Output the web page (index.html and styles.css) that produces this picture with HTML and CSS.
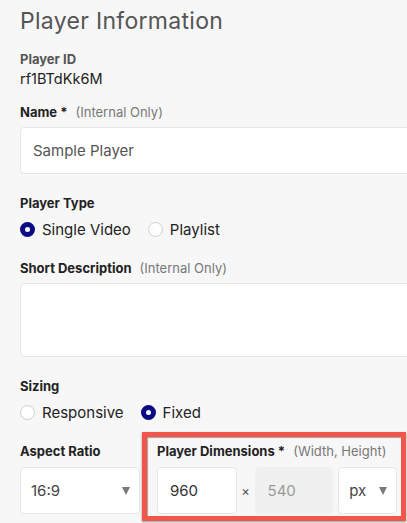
FILE: index.html
```html
<!DOCTYPE html>
<html lang="en">
<head>
<meta charset="utf-8">
<title>Player Information</title>
<link rel="stylesheet" href="styles.css">
</head>
<body>
<main class="form">
  <h1 class="title">Player Information</h1>

  <section class="field field-id">
    <div class="label label-muted">Player ID</div>
    <div class="value">rf1BTdKk6M</div>
  </section>

  <section class="field field-name">
    <div class="label">Name * <span class="hint">(Internal Only)</span></div>
    <div class="input input-wide">Sample Player</div>
  </section>

  <section class="field field-type">
    <div class="label">Player Type</div>
    <div class="radios">
      <span class="radio radio-on"></span><span class="radio-text">Single Video</span>
      <span class="radio"></span><span class="radio-text">Playlist</span>
    </div>
  </section>

  <section class="field field-desc">
    <div class="label">Short Description <span class="hint">(Internal Only)</span></div>
    <div class="input input-wide textarea"></div>
  </section>

  <section class="field field-sizing">
    <div class="label">Sizing</div>
    <div class="radios">
      <span class="radio"></span><span class="radio-text">Responsive</span>
      <span class="radio radio-on"></span><span class="radio-text">Fixed</span>
    </div>
  </section>

  <section class="field row">
    <div class="col col-aspect">
      <div class="label">Aspect Ratio</div>
      <div class="input select select-aspect"><span>16:9</span><span class="caret"></span></div>
    </div>
    <div class="col col-dims">
      <div class="label">Player Dimensions * <span class="hint">(Width, Height)</span></div>
      <div class="dims">
        <div class="input dim">960</div>
        <span class="times">×</span>
        <div class="input dim dim-disabled">540</div>
        <div class="input select select-unit"><span>px</span><span class="caret"></span></div>
      </div>
    </div>
  </section>
</main>
</body>
</html>
```

FILE: styles.css
```css
html {
  overflow: hidden;
  background: #f7f7f7;
}

body {
  margin: 0;
  padding: 0;
  font-family: Inter, "Liberation Sans", sans-serif;
  color: #222;
}

.form {
  width: 460px;
  padding: 0 0 20px 20px;
}

.title {
  margin: 7px 0 0;
  font-size: 23px;
  letter-spacing: 0.3px;
  line-height: 28px;
  font-weight: 400;
  color: #555;
}

.field-id {
  margin-top: 15px;
}

.field-name {
  margin-top: 15px;
}

.field-type {
  margin-top: 20px;
}

.field-desc {
  margin-top: 19px;
}

.field-sizing {
  margin-top: 20px;
}

.label {
  font-size: 13px;
  line-height: 18px;
  font-weight: 700;
  color: #222;
}

.label-muted {
  color: #555;
}

.hint {
  margin-left: 5px;
  font-weight: 400;
  color: #777;
}

.value {
  margin-top: 2px;
  font-size: 14.5px;
  line-height: 18px;
  color: #222;
}

.input {
  box-sizing: border-box;
  height: 47px;
  margin-top: 6px;
  background: #fff;
  border: 1px solid #e6e6e6;
  border-radius: 4px;
  font-size: 15px;
  color: #555;
  display: flex;
  align-items: center;
  padding: 0 12px;
}

.input-wide {
  width: 440px;
}

.textarea {
  height: 74px;
}

.radios {
  margin-top: 6px;
  display: flex;
  align-items: center;
  height: 22px;
  font-size: 15px;
  color: #222;
}

.radio {
  box-sizing: border-box;
  width: 15px;
  height: 15px;
  border-radius: 50%;
  border: 1px solid #cfcfcf;
  background: #fff;
  margin-right: 7px;
}

.radio-on {
  border: 5px solid #0b0b86;
  background: #fff;
}

.radio-text {
  margin-right: 17px;
}

.row {
  margin-top: 19px;
  display: flex;
  gap: 17px;
}

.row .input {
  margin-top: 7px;
}

.col-aspect {
  width: 120px;
}

.col-dims {
  position: relative;
  width: 240px;
}

.col-dims::before {
  content: "";
  position: absolute;
  left: -15px;
  top: -10px;
  right: -9px;
  bottom: -7px;
  border: 5px solid #f2554a;
  box-shadow: inset 1px 1px 1px rgba(0, 0, 0, 0.35), 0 1px 2px rgba(0, 0, 0, 0.4);
  pointer-events: none;
}

.select {
  justify-content: space-between;
  color: #444;
  padding: 0 9px 0 10px;
}

.caret {
  width: 0;
  height: 0;
  border-left: 4px solid transparent;
  border-right: 4px solid transparent;
  border-top: 8px solid #7a7a7a;
}

.dims {
  display: flex;
  align-items: center;
}

.dim {
  width: 80px;
  color: #333;
}

.dim-disabled {
  width: 79px;
  background: #f0f0f0;
  border-color: #f0f0f0;
  color: #9a9a9a;
}

.times {
  width: 18px;
  margin-top: 7px;
  text-align: center;
  font-size: 13px;
  color: #555;
}

.select-unit {
  width: 59px;
  margin-left: 5px;
}
```
